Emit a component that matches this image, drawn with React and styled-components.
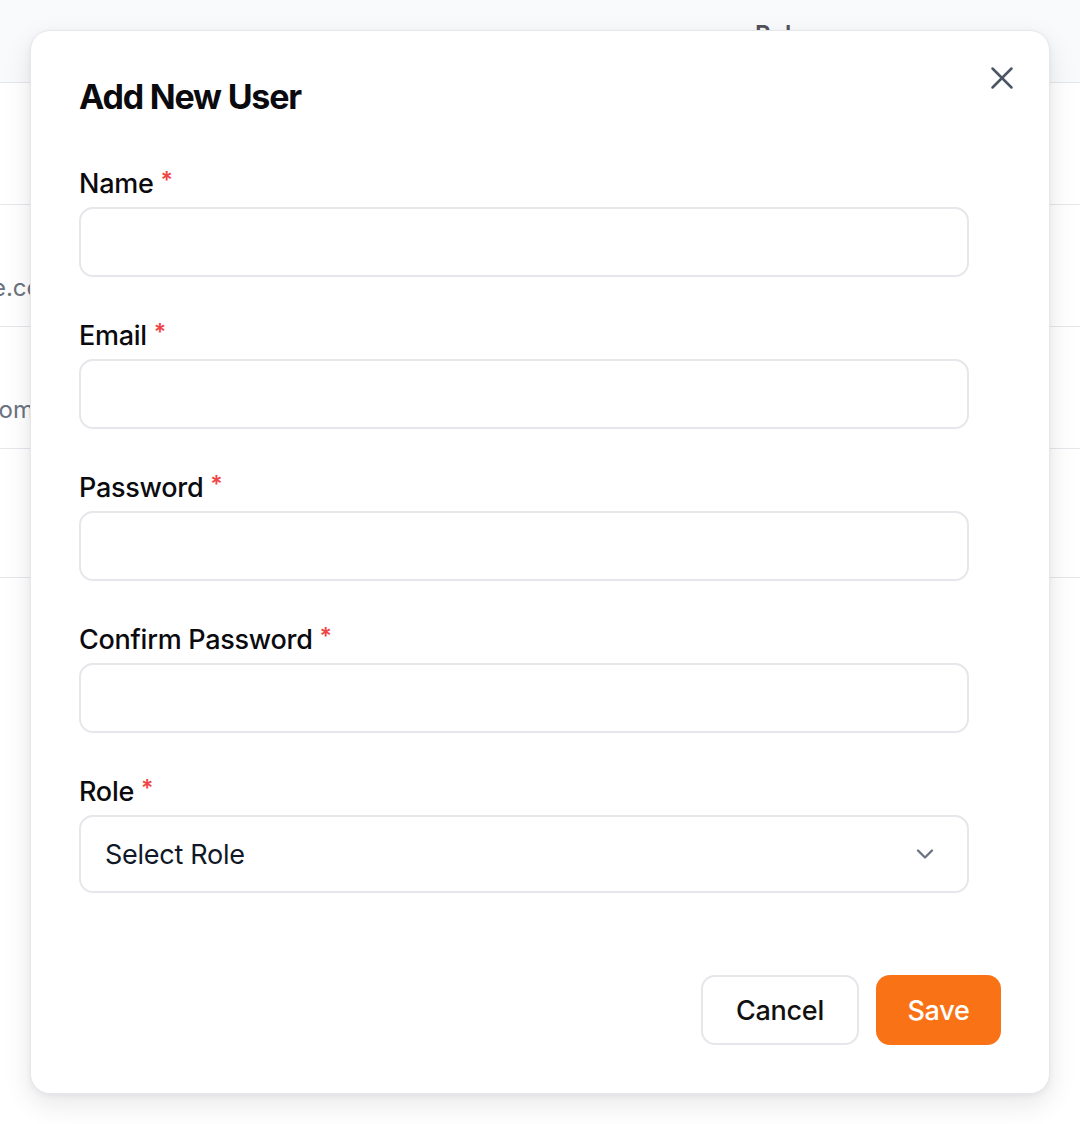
import React from "react";
import styled, { createGlobalStyle } from "styled-components";
import { ChevronDown, X } from "lucide-react";

const Global = createGlobalStyle`
  html, body { margin: 0; padding: 0; background: #ffffff; }
  body { font-family: Inter, "Noto Sans", "Liberation Sans", sans-serif; color: #111827; }
  * { box-sizing: border-box; }
`;

const Page = styled.div`
  position: relative;
  width: 1080px;
  height: 1124px;
  overflow: hidden;
  background: #ffffff;
`;

const Table = styled.div`
  display: flex;
  flex-direction: column;
  width: 100%;
`;

const HeaderRow = styled.div`
  display: flex;
  align-items: flex-start;
  height: 83px;
  background: #f9fafb;
  border-bottom: 1px solid #e5e7eb;
  padding-left: 755px;
  padding-top: 20px;
  font-size: 24px;
  font-weight: 600;
  color: #52525b;
`;

const Row = styled.div`
  display: flex;
  height: ${(p) => p.$h}px;
  border-bottom: 1px solid #e5e7eb;
`;

const EmailCell = styled.div`
  display: flex;
  justify-content: flex-end;
  align-items: center;
  width: ${(p) => p.$w}px;
  padding-top: 44px;
  white-space: nowrap;
  font-size: 24px;
  color: #6b7280;
`;

const Modal = styled.div`
  position: absolute;
  left: 30px;
  top: 30px;
  width: 1020px;
  height: 1064px;
  background: #ffffff;
  border: 1px solid #e5e7eb;
  border-radius: 20px;
  box-shadow: 0 10px 28px rgba(17, 24, 39, 0.1), 0 2px 6px rgba(17, 24, 39, 0.05);
  padding: 45px 48px 48px;
  display: flex;
  flex-direction: column;
`;

const CloseButton = styled.button`
  position: absolute;
  top: 27px;
  right: 27px;
  width: 40px;
  height: 40px;
  display: flex;
  align-items: center;
  justify-content: center;
  border: none;
  background: transparent;
  color: #4b5563;
  padding: 0;
  cursor: pointer;
`;

const Title = styled.h2`
  margin: 0;
  font-size: 34px;
  line-height: 42px;
  font-weight: 700;
  letter-spacing: -0.035em;
  color: #0b0b0f;
`;

const Form = styled.form`
  display: flex;
  flex-direction: column;
  gap: 41px;
  width: 890px;
  margin-top: 48px;
`;

const Field = styled.div`
  display: flex;
  flex-direction: column;
  gap: 5px;
`;

const Label = styled.label`
  display: flex;
  align-items: flex-start;
  height: 36px;
  font-size: 27px;
  line-height: 36px;
  font-weight: 500;
  color: #0b0b0f;
  letter-spacing: -0.01em;
`;

const Required = styled.span`
  color: #ef4444;
  font-size: 23px;
  font-weight: 600;
  line-height: 1;
  margin-left: 7px;
  margin-top: 3px;
`;

const Input = styled.input`
  height: 70px;
  width: 100%;
  border: 2px solid #e5e7eb;
  border-radius: 14px;
  background: #ffffff;
  padding: 0 24px;
  font-size: 27px;
  font-family: inherit;
  outline: none;
`;

const SelectBox = styled.div`
  height: 78px;
  width: 100%;
  border: 2px solid #e5e7eb;
  border-radius: 14px;
  background: #ffffff;
  padding: 0 28px 0 24px;
  display: flex;
  align-items: center;
  justify-content: space-between;
  font-size: 27px;
  color: #111827;
  letter-spacing: -0.01em;
`;

const Actions = styled.div`
  display: flex;
  justify-content: flex-end;
  gap: 17px;
  margin-top: auto;
`;

const Button = styled.button`
  height: 70px;
  min-width: ${(p) => p.$w}px;
  border-radius: 14px;
  font-family: inherit;
  font-size: 27px;
  font-weight: 500;
  letter-spacing: -0.01em;
  cursor: pointer;
  border: ${(p) => (p.$primary ? "none" : "2px solid #e5e7eb")};
  background: ${(p) => (p.$primary ? "#f97316" : "#ffffff")};
  color: ${(p) => (p.$primary ? "#ffffff" : "#111111")};
`;

const fields = ["Name", "Email", "Password", "Confirm Password"];

export default function App() {
  return (
    <Page>
      <Global />
      <Table>
        <HeaderRow>Role</HeaderRow>
        <Row $h={122} />
        <Row $h={122}>
          <EmailCell $w={62}>admin@example.com</EmailCell>
        </Row>
        <Row $h={122}>
          <EmailCell $w={34}>jane@company.com</EmailCell>
        </Row>
        <Row $h={129} />
      </Table>

      <Modal role="dialog" aria-label="Add New User">
        <CloseButton aria-label="Close">
          <X size={38} strokeWidth={1.6} />
        </CloseButton>
        <Title>Add New User</Title>
        <Form>
          {fields.map((f) => (
            <Field key={f}>
              <Label>
                {f}
                <Required>*</Required>
              </Label>
              <Input type={f.includes("Password") ? "password" : "text"} />
            </Field>
          ))}
          <Field>
            <Label>
              Role
              <Required>*</Required>
            </Label>
            <SelectBox>
              <span>Select Role</span>
              <ChevronDown size={28} color="#6b7280" strokeWidth={2} />
            </SelectBox>
          </Field>
        </Form>
        <Actions>
          <Button type="button" $w={158}>Cancel</Button>
          <Button type="button" $primary $w={125}>Save</Button>
        </Actions>
      </Modal>
    </Page>
  );
}
